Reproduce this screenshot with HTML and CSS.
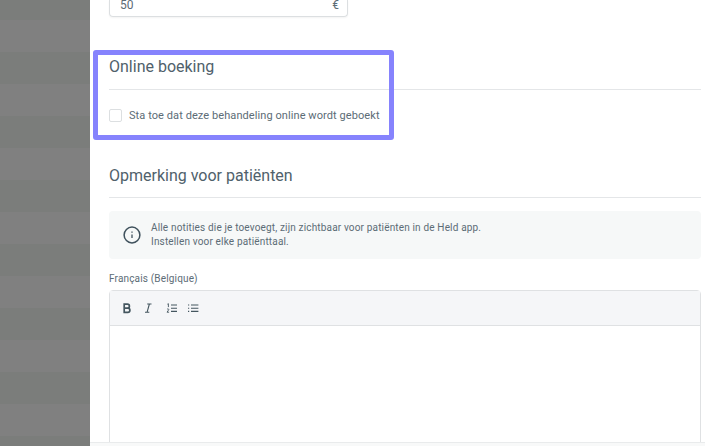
FILE: index.html
```html
<!DOCTYPE html>
<html lang="en">
<head>
  <meta charset="UTF-8">
  <meta name="viewport" content="width=device-width, initial-scale=1.0">
  <title>Behandeling</title>
  <link rel="stylesheet" href="styles.css">
</head>
<body>

  <div class="page">
    <div class="sidebar">
      <div class="band alt"></div>
      <div class="band"></div>
      <div class="band alt"></div>
      <div class="band"></div>
      <div class="band alt"></div>
      <div class="band"></div>
      <div class="band alt"></div>
      <div class="band"></div>
      <div class="band alt"></div>
      <div class="band"></div>
      <div class="band alt"></div>
      <div class="band"></div>
      <div class="band alt"></div>
      <div class="band"></div>
      <div class="band alt"></div>
    </div>

    <div class="main">
      <div class="price-input">
        <span>50</span>
        <span class="currency">€</span>
      </div>

      <div class="section online">
        <h2>Online boeking</h2>
        <label class="check-row">
          <span class="checkbox"></span>
          <span>Sta toe dat deze behandeling online wordt geboekt</span>
        </label>
      </div>

      <div class="section notes">
        <h2>Opmerking voor patiënten</h2>
        <div class="info-box">
          <svg class="info-icon" width="18" height="18" viewBox="0 0 18 18" fill="none" stroke="#3f515c">
            <circle cx="9" cy="9" r="7.9" stroke-width="1.5"/>
            <path d="M9 8.4v3.6" stroke-width="1.3"/>
            <path d="M9 5.6v1.2" stroke-width="1.3"/>
          </svg>
          <div>
            Alle notities die je toevoegt, zijn zichtbaar voor patiënten in de Held app.<br>
            Instellen voor elke patiënttaal.
          </div>
        </div>

        <div class="editor-label">Français (Belgique)</div>
        <div class="editor">
          <div class="toolbar">
            <svg width="12" height="12" viewBox="0 0 12 12" fill="none" stroke="#44565f" stroke-width="1.7">
              <path d="M2.2 2.2h3.2a2 2 0 0 1 0 4H2.2zM2.2 6.2h3.6a2.1 2.1 0 0 1 0 4.2H2.2z"/>
            </svg>
            <svg width="12" height="12" viewBox="0 0 12 12" fill="none" stroke="#44565f" stroke-width="1.1">
              <path d="M3.2 2h4.3M1 10.2h4.3M5.4 2L3.1 10.2"/>
            </svg>
            <svg width="12" height="12" viewBox="0 0 12 12" fill="none" stroke="#44565f">
              <path d="M5 3h6M5 6.2h6M5 9.4h6" stroke-width="1.1"/>
              <path d="M1.4 2.2l1-.5v3.4M1 7.4c.4-.8 2-.6 1.8.4-.1.7-1.6 1.3-1.8 2.4h2.1" stroke-width=".9"/>
            </svg>
            <svg width="12" height="12" viewBox="0 0 12 12" fill="none" stroke="#44565f" stroke-width="1.1">
              <path d="M3 3h7.4M3 6.2h7.4M3 9.4h7.4M0 3h1.2M0 6.2h1.2M0 9.4h1.2"/>
            </svg>
          </div>
          <div class="editor-body"></div>
        </div>
      </div>
    </div>

    <!-- highlight drawn over the online booking section -->
    <div class="highlight"></div>
    <div class="footer-edge"></div>
  </div>

</body>
</html>
```

FILE: styles.css
```css
html, body {
  margin: 0;
  height: 100%;
  overflow: hidden;
}

body {
  font-family: Roboto, "Liberation Sans", sans-serif;
  background-color: #fff;
  color: #5c6c76;
}

.page {
  display: flex;
  position: relative;
  height: 446px;
  overflow: hidden;
}

.sidebar {
  width: 90px;
  flex-shrink: 0;
  margin-top: -12px;
  background-color: #7f7f7f;
}

.band {
  height: 32px;
  background-color: #808080;
}

.band.alt {
  background-color: #7b7d7b;
}

.main {
  flex: 1;
  min-width: 0;
  padding: 0 4px 0 19px;
}

.price-input {
  display: flex;
  justify-content: space-between;
  box-sizing: border-box;
  width: 239px;
  height: 17px;
  padding: 0 8px 0 10px;
  border: 1px solid #dcdfe1;
  border-top: 0;
  border-radius: 0 0 4px 4px;
  box-shadow: 0 1px 2px rgba(0, 0, 0, 0.05);
  font-size: 12px;
  line-height: 11px;
}

.currency {
  font-size: 12px;
}

.section h2 {
  margin: 0;
  padding-bottom: 10px;
  border-bottom: 1px solid #e4e6e8;
  color: #50616b;
  font-size: 16px;
  font-weight: 400;
  line-height: 24px;
}

.online {
  padding-top: 38px;
}

.check-row {
  display: flex;
  align-items: center;
  gap: 7px;
  margin-top: 19px;
  font-size: 11px;
  line-height: 13px;
  letter-spacing: 0.08px;
}

.checkbox {
  box-sizing: border-box;
  width: 13px;
  height: 13px;
  border: 1px solid #dcdfe1;
  border-radius: 2px;
}

.notes {
  padding-top: 42px;
}

.notes h2 {
  padding-bottom: 9px;
}

.info-box {
  display: flex;
  align-items: center;
  gap: 10px;
  margin-top: 13px;
  padding: 10px 14px;
  border-radius: 4px;
  background-color: #f6f8f8;
  font-size: 10px;
  line-height: 14px;
  letter-spacing: 0.16px;
}

.info-icon {
  flex-shrink: 0;
}

.editor-label {
  margin-top: 13px;
  font-size: 10px;
  line-height: 14px;
  letter-spacing: 0.16px;
}

.editor {
  margin-top: 4px;
  border: 1px solid #dfe1e3;
  border-radius: 4px 4px 0 0;
}

.toolbar {
  display: flex;
  align-items: center;
  gap: 10px;
  height: 34px;
  padding: 0 12px;
  border-bottom: 1px solid #dfe1e3;
  background-color: #f5f6f8;
}

.editor-body {
  height: 125px;
}

.highlight {
  position: absolute;
  left: 93px;
  top: 50px;
  box-sizing: border-box;
  width: 301px;
  height: 90px;
  border: 5px solid #8683fd;
  border-radius: 3px;
}

.footer-edge {
  position: absolute;
  left: 90px;
  right: 0;
  bottom: 0;
  height: 3px;
  border-top: 1px solid #e9ebec;
  background-color: #f8f9f9;
}
```
